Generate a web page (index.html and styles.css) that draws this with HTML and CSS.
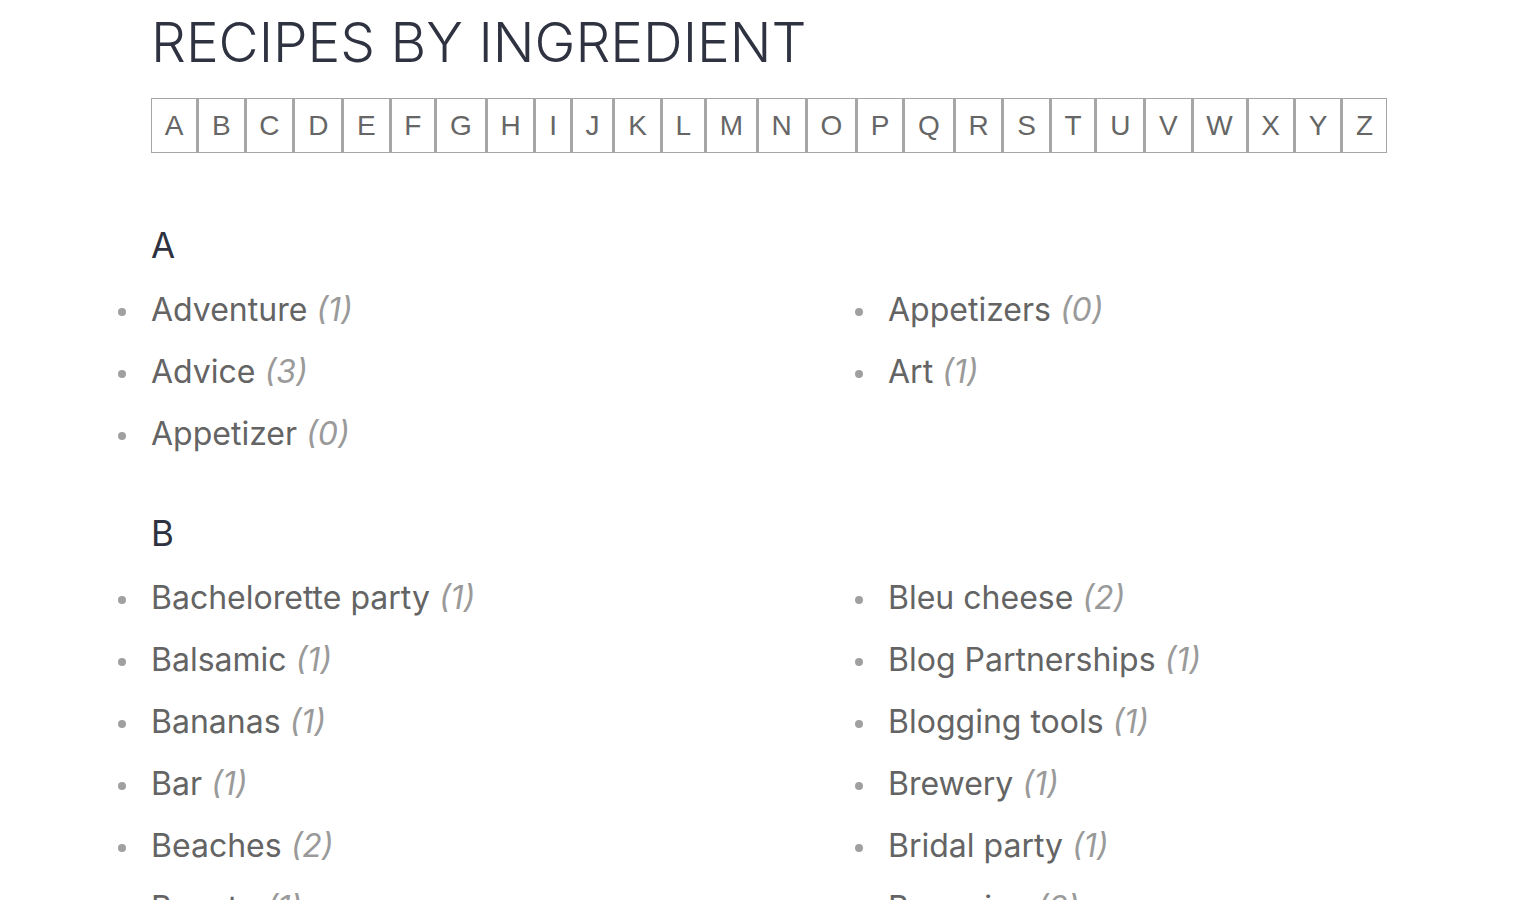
FILE: index.html
```html
<!DOCTYPE html>
<html lang="en">
<head>
<meta charset="utf-8">
<title>Recipes by Ingredient</title>
<link rel="stylesheet" href="styles.css">
</head>
<body>
<main class="page">
  <h1 class="title">RECIPES BY INGREDIENT</h1>
  <nav class="letters">
    <a class="letter" href="#a">A</a><a class="letter" href="#b">B</a><a class="letter" href="#c">C</a><a class="letter" href="#d">D</a><a class="letter" href="#e">E</a><a class="letter" href="#f">F</a><a class="letter" href="#g">G</a><a class="letter" href="#h">H</a><a class="letter" href="#i">I</a><a class="letter" href="#j">J</a><a class="letter" href="#k">K</a><a class="letter" href="#l">L</a><a class="letter" href="#m">M</a><a class="letter" href="#n">N</a><a class="letter" href="#o">O</a><a class="letter" href="#p">P</a><a class="letter" href="#q">Q</a><a class="letter" href="#r">R</a><a class="letter" href="#s">S</a><a class="letter" href="#t">T</a><a class="letter" href="#u">U</a><a class="letter" href="#v">V</a><a class="letter" href="#w">W</a><a class="letter" href="#x">X</a><a class="letter" href="#y">Y</a><a class="letter" href="#z">Z</a>
  </nav>

  <section class="group" id="a">
    <h2 class="group-title">A</h2>
    <div class="cols">
      <ul class="items">
        <li class="item"><span class="name">Adventure</span> <span class="count">(1)</span></li>
        <li class="item"><span class="name">Advice</span> <span class="count">(3)</span></li>
        <li class="item"><span class="name">Appetizer</span> <span class="count">(0)</span></li>
      </ul>
      <ul class="items">
        <li class="item"><span class="name">Appetizers</span> <span class="count">(0)</span></li>
        <li class="item"><span class="name">Art</span> <span class="count">(1)</span></li>
      </ul>
    </div>
  </section>

  <section class="group" id="b">
    <h2 class="group-title">B</h2>
    <div class="cols">
      <ul class="items">
        <li class="item"><span class="name">Bachelorette party</span> <span class="count">(1)</span></li>
        <li class="item"><span class="name">Balsamic</span> <span class="count">(1)</span></li>
        <li class="item"><span class="name">Bananas</span> <span class="count">(1)</span></li>
        <li class="item"><span class="name">Bar</span> <span class="count">(1)</span></li>
        <li class="item"><span class="name">Beaches</span> <span class="count">(2)</span></li>
        <li class="item"><span class="name">Beauty</span> <span class="count">(1)</span></li>
      </ul>
      <ul class="items">
        <li class="item"><span class="name">Bleu cheese</span> <span class="count">(2)</span></li>
        <li class="item"><span class="name">Blog Partnerships</span> <span class="count">(1)</span></li>
        <li class="item"><span class="name">Blogging tools</span> <span class="count">(1)</span></li>
        <li class="item"><span class="name">Brewery</span> <span class="count">(1)</span></li>
        <li class="item"><span class="name">Bridal party</span> <span class="count">(1)</span></li>
        <li class="item"><span class="name">Brownies</span> <span class="count">(2)</span></li>
      </ul>
    </div>
  </section>
</main>
</body>
</html>
```
FILE: styles.css
```css
html, body {
  margin: 0;
  padding: 0;
  background: #ffffff;
}

body {
  font-family: "Inter", "Liberation Sans", Arial, sans-serif;
  color: #666666;
}

.page {
  padding: 0 0 0 151px;
}

.title {
  margin: 0;
  padding-top: 10px;
  font-family: "Inter", "Liberation Sans", sans-serif;
  font-weight: 300;
  font-size: 55px;
  line-height: 64px;
  color: #2f3240;
}

.letters {
  display: inline-flex;
  margin-top: 24px;
  gap: 3px;
  padding: 1px;
  background: #a6a6a6;
}

.letter {
  display: block;
  background: #ffffff;
  padding: 0 12.8px;
  font-family: "Liberation Sans", Arial, sans-serif;
  font-size: 28px;
  line-height: 53px;
  color: #666666;
  text-decoration: none;
}

.group {
  margin-top: 72px;
}

.group + .group {
  margin-top: 48px;
}

.group-title {
  margin: 0 0 14px 0;
  font-weight: 400;
  font-size: 35px;
  line-height: 40px;
  color: #2f3240;
}

.cols {
  display: grid;
  grid-template-columns: 737px 1fr;
}

.items {
  list-style: none;
  margin: 0;
  padding: 0;
}

.item {
  display: block;
  height: 62px;
  font-size: 32px;
  line-height: 62px;
  white-space: nowrap;
}

.item::before {
  content: "";
  display: inline-block;
  vertical-align: middle;
  width: 8px;
  height: 8px;
  border-radius: 50%;
  background: #a0a0a0;
  margin-left: -33px;
  margin-right: 25px;
}

.name {
  color: #646464;
}

.count {
  font-style: italic;
  color: #9a9a9a;
}
```
